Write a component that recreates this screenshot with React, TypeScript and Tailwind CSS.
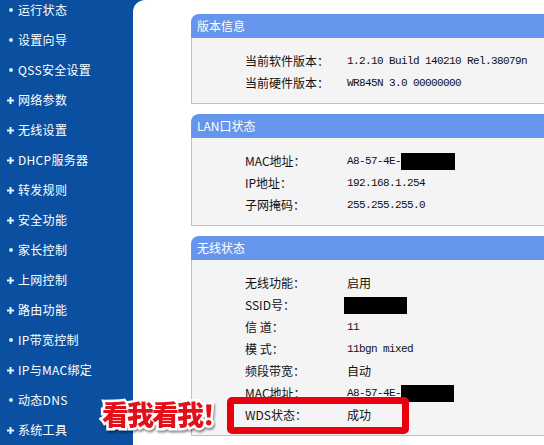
import React from "react";

type NavItem = { label: string; plus: boolean };

const nav: NavItem[] = [
  { label: "运行状态", plus: false },
  { label: "设置向导", plus: false },
  { label: "QSS安全设置", plus: false },
  { label: "网络参数", plus: true },
  { label: "无线设置", plus: true },
  { label: "DHCP服务器", plus: true },
  { label: "转发规则", plus: true },
  { label: "安全功能", plus: true },
  { label: "家长控制", plus: false },
  { label: "上网控制", plus: true },
  { label: "路由功能", plus: true },
  { label: "IP带宽控制", plus: false },
  { label: "IP与MAC绑定", plus: true },
  { label: "动态DNS", plus: false },
  { label: "系统工具", plus: true },
];

type Row = { label: string; value?: string; cn?: boolean; redact?: number; shift?: boolean };

const cards: { title: string; rows: Row[] }[] = [
  {
    title: "版本信息",
    rows: [
      { label: "当前软件版本：", value: "1.2.10 Build 140210 Rel.38079n" },
      { label: "当前硬件版本：", value: "WR845N 3.0 00000000" },
    ],
  },
  {
    title: "LAN口状态",
    rows: [
      { label: "MAC地址：", value: "A8-57-4E-", redact: 54 },
      { label: "IP地址：", value: "192.168.1.254" },
      { label: "子网掩码：", value: "255.255.255.0" },
    ],
  },
  {
    title: "无线状态",
    rows: [
      { label: "无线功能：", value: "启用", cn: true },
      { label: "SSID号：", value: "", redact: 63, shift: true },
      { label: "信 道：", value: "11" },
      { label: "模 式：", value: "11bgn mixed" },
      { label: "频段带宽：", value: "自动", cn: true },
      { label: "MAC地址：", value: "A8-57-4E-", redact: 53 },
      { label: "WDS状态：", value: "成功", cn: true },
    ],
  },
];

const cjk = "font-['Noto_Sans_CJK_SC',sans-serif]";
const mono = "font-['Liberation_Mono','Noto_Sans_CJK_SC',monospace]";

function Bullet({ plus }: { plus: boolean }) {
  if (plus) {
    return (
      <svg width="7" height="7" viewBox="0 0 7 7" className="shrink-0">
        <rect x="2.5" y="0" width="2" height="7" fill="#e6f6f2" />
        <rect x="0" y="2.5" width="7" height="2" fill="#e6f6f2" />
      </svg>
    );
  }
  return (
    <div className="w-[7px] h-[7px] shrink-0 flex items-center justify-center">
      <div className="w-[4px] h-[4px] rounded-full bg-[#d6f0ee]" />
    </div>
  );
}

export default function App() {
  return (
    <div className={`relative w-[544px] h-[445px] overflow-hidden bg-[#0b50a0] flex ${cjk}`}>
      <aside className="w-[133px] shrink-0 -mt-[5px] flex flex-col">
        {nav.map((n) => (
          <div key={n.label} className="h-[30px] flex items-center pl-[7px] gap-[4px]">
            <Bullet plus={n.plus} />
            <span className="text-white text-[12px] leading-none tracking-[0.3px]">{n.label}</span>
          </div>
        ))}
      </aside>
      <main className="flex-1 min-w-0 overflow-hidden bg-white rounded-tl-[12px] pl-[58px] pt-[14px] flex flex-col gap-[10px]">
        {cards.map((c) => (
          <section key={c.title} className="w-[400px] shrink-0">
            <div className="h-[24px] bg-[#6595ec] rounded-tl-[8px] flex items-center pl-[6px] text-white text-[12px]">
              {c.title}
            </div>
            <div className="bg-[#f4f4f4] border-l border-b border-[#e3b98b] pl-[53px] pt-[12px] pb-[9px]">
              {c.rows.map((r) => (
                <div key={r.label + (r.value ?? "")} className="h-[22px] flex items-center text-[12px] text-[#111]">
                  <span className="w-[102px] shrink-0">{r.label}</span>
                  {r.cn ? (
                    <span className="text-[12px]">{r.value}</span>
                  ) : (
                    <span className={`${mono} text-[11px] tracking-[-0.6px] flex items-center ${r.shift ? "-ml-[3px]" : ""}`}>
                      {r.value}
                      {r.redact ? (
                        <span
                          className="inline-block bg-black h-[17px]"
                          style={{ width: r.redact }}
                        />
                      ) : null}
                    </span>
                  )}
                </div>
              ))}
            </div>
          </section>
        ))}
      </main>
      <div className="absolute left-[227px] top-[397px] w-[182px] h-[37px] border-[7px] border-[#e8000f] rounded-[5px]" />
      <div
        className="absolute left-[102px] top-[394px] text-[27px] leading-[40px] font-black text-[#e2101a] tracking-[-2px] [-webkit-text-stroke:5px_white] [paint-order:stroke_fill] [filter:drop-shadow(1px_2px_1px_rgba(0,0,0,0.45))]"
      >
        看我看我！
      </div>
    </div>
  );
}
